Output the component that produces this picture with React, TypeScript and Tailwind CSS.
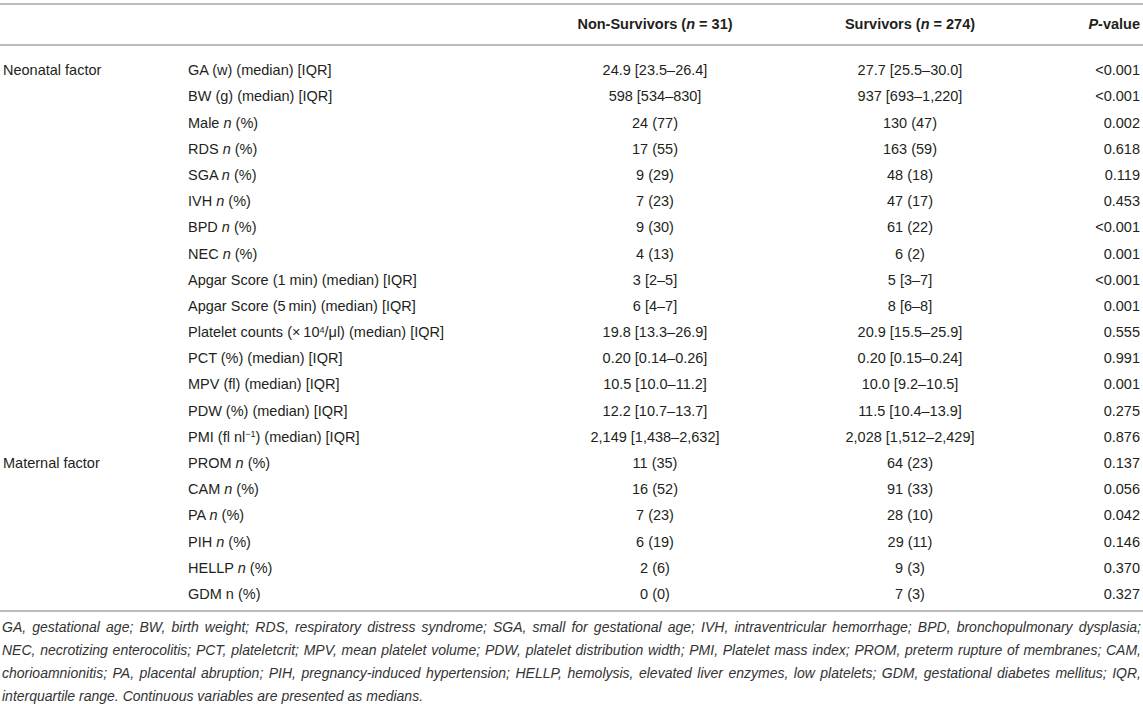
import type { ReactNode } from 'react'

type Row = {
  group?: string
  label: ReactNode
  non: string
  surv: string
  p: string
}

const N = () => <i>n</i>

const rows: Row[] = [
  { group: 'Neonatal factor', label: 'GA (w) (median) [IQR]', non: '24.9 [23.5–26.4]', surv: '27.7 [25.5–30.0]', p: '<0.001' },
  { label: 'BW (g) (median) [IQR]', non: '598 [534–830]', surv: '937 [693–1,220]', p: '<0.001' },
  { label: <>Male <N /> (%)</>, non: '24 (77)', surv: '130 (47)', p: '0.002' },
  { label: <>RDS <N /> (%)</>, non: '17 (55)', surv: '163 (59)', p: '0.618' },
  { label: <>SGA <N /> (%)</>, non: '9 (29)', surv: '48 (18)', p: '0.119' },
  { label: <>IVH <N /> (%)</>, non: '7 (23)', surv: '47 (17)', p: '0.453' },
  { label: <>BPD <N /> (%)</>, non: '9 (30)', surv: '61 (22)', p: '<0.001' },
  { label: <>NEC <N /> (%)</>, non: '4 (13)', surv: '6 (2)', p: '0.001' },
  { label: 'Apgar Score (1 min) (median) [IQR]', non: '3 [2–5]', surv: '5 [3–7]', p: '<0.001' },
  { label: 'Apgar Score (5\u2009min) (median) [IQR]', non: '6 [4–7]', surv: '8 [6–8]', p: '0.001' },
  {
    label: (
      <>
        Platelet counts (×{'\u2009'}10<sup className="text-[9px]">4</sup>/μl) (median) [IQR]
      </>
    ),
    non: '19.8 [13.3–26.9]',
    surv: '20.9 [15.5–25.9]',
    p: '0.555',
  },
  { label: 'PCT (%) (median) [IQR]', non: '0.20 [0.14–0.26]', surv: '0.20 [0.15–0.24]', p: '0.991' },
  { label: 'MPV (fl) (median) [IQR]', non: '10.5 [10.0–11.2]', surv: '10.0 [9.2–10.5]', p: '0.001' },
  { label: 'PDW (%) (median) [IQR]', non: '12.2 [10.7–13.7]', surv: '11.5 [10.4–13.9]', p: '0.275' },
  {
    label: (
      <>
        PMI (fl nl<sup className="text-[9px]">−1</sup>) (median) [IQR]
      </>
    ),
    non: '2,149 [1,438–2,632]',
    surv: '2,028 [1,512–2,429]',
    p: '0.876',
  },
  { group: 'Maternal factor', label: <>PROM <N /> (%)</>, non: '11 (35)', surv: '64 (23)', p: '0.137' },
  { label: <>CAM <N /> (%)</>, non: '16 (52)', surv: '91 (33)', p: '0.056' },
  { label: <>PA <N /> (%)</>, non: '7 (23)', surv: '28 (10)', p: '0.042' },
  { label: <>PIH <N /> (%)</>, non: '6 (19)', surv: '29 (11)', p: '0.146' },
  { label: <>HELLP <N /> (%)</>, non: '2 (6)', surv: '9 (3)', p: '0.370' },
  { label: 'GDM n (%)', non: '0 (0)', surv: '7 (3)', p: '0.327' },
]

const notes = [
  'GA, gestational age; BW, birth weight; RDS, respiratory distress syndrome; SGA, small for gestational age; IVH, intraventricular hemorrhage; BPD, bronchopulmonary dysplasia;',
  'NEC, necrotizing enterocolitis; PCT, plateletcrit; MPV, mean platelet volume; PDW, platelet distribution width; PMI, Platelet mass index; PROM, preterm rupture of membranes; CAM,',
  'chorioamnionitis; PA, placental abruption; PIH, pregnancy-induced hypertension; HELLP, hemolysis, elevated liver enzymes, low platelets; GDM, gestational diabetes mellitus; IQR,',
]

const cols = 'grid grid-cols-[188px_352px_230px_280px_1fr]'

export default function App() {
  return (
    <div
      className="w-[1143px] h-[704px] overflow-hidden bg-white text-[#231f20] text-[14.5px]"
      style={{ fontFamily: '"Liberation Sans", Arial, sans-serif' }}
    >
      <div className="pt-[3px]">
        <div className="border-t-2 border-[#bdbdbd]" />
        <div className={`${cols} h-[39px] items-center font-bold`}>
          <div />
          <div />
          <div className="text-center">
            Non-Survivors (<i>n</i> = 31)
          </div>
          <div className="text-center">
            Survivors (<i>n</i> = 274)
          </div>
          <div className="text-right pr-[3px]">
            <i>P</i>-value
          </div>
        </div>
        <div className="border-t-2 border-[#bdbdbd]" />
        <div className="pt-[12px] pb-[2px]">
          {rows.map((r, i) => (
            <div key={i} className={`${cols} h-[26.2px] items-center`}>
              <div className="pl-[3px]">{r.group}</div>
              <div>{r.label}</div>
              <div className="text-center">{r.non}</div>
              <div className="text-center">{r.surv}</div>
              <div className="text-right pr-[3px]">{r.p}</div>
            </div>
          ))}
        </div>
        <div className="border-t-2 border-[#bdbdbd]" />
        <div className="pt-[4px] px-[2px] italic text-[14px] leading-[23px] text-[#333]">
          {notes.map((t, i) => (
            <div key={i} className="whitespace-nowrap text-justify [text-align-last:justify]">
              {t}
            </div>
          ))}
          <div>interquartile range. Continuous variables are presented as medians.</div>
        </div>
      </div>
    </div>
  )
}
